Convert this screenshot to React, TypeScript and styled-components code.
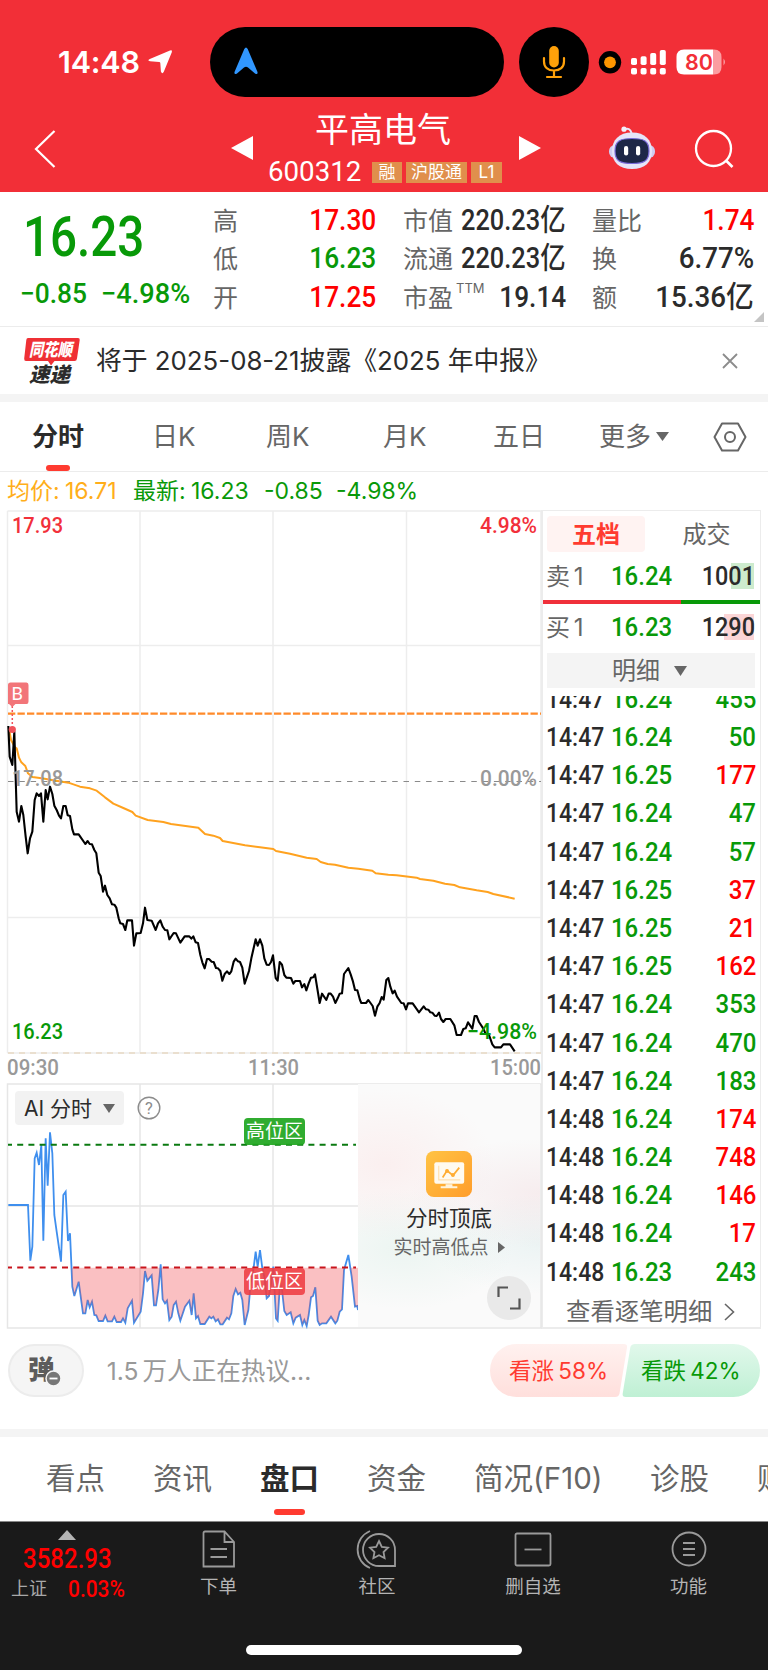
import React from "react";
import styled, { createGlobalStyle, css } from "styled-components";

const RED = "#ff0000";
const GREEN = "#089908";
const INK = "#2b2b2b";
const GREY = "#666";

const Global = createGlobalStyle`
  * { box-sizing: border-box; }
  body { margin: 0; background: #fff; }
  svg { display: block; flex: none; overflow: visible; }
  svg text { font-family: Roboto, "Noto Sans CJK SC", sans-serif; }
`;

const Page = styled.div`
  width: 768px;
  height: 1670px;
  overflow: hidden;
  background: #fff;
  color: ${INK};
  font-family: Inter, "Noto Sans CJK SC", sans-serif;
  line-height: 1;
  white-space: nowrap;
`;

const Num = styled.span<{ $size: number; $color?: string; $x?: number; $from?: string; $weight?: number }>`
  display: inline-block;
  font-family: Roboto, "Noto Sans CJK SC", sans-serif;
  font-size: ${(p) => p.$size}px;
  font-weight: ${(p) => p.$weight ?? 500};
  color: ${(p) => p.$color ?? "inherit"};
  transform: scaleX(${(p) => p.$x ?? 0.89});
  transform-origin: ${(p) => p.$from ?? "left"} center;
`;

/* ---------- header ---------- */
const Header = styled.header`
  height: 192px;
  background: #f22f37;
  color: #fff;
`;
const StatusBar = styled.div`
  height: 97px;
  padding: 27px 0 0 58px;
  display: flex;
`;
const Clock = styled.div`
  width: 152px;
  height: 70px;
  display: flex;
  align-items: center;
  gap: 8px;
  font: 600 30.5px/1 Inter, sans-serif;
  letter-spacing: -0.2px;
`;
const Island = styled.div`
  width: 294px;
  height: 70px;
  border-radius: 35px;
  background: #000;
  padding: 20px 0 0 23px;
  margin-right: 15px;
`;
const MicBubble = styled.div`
  width: 70px;
  height: 70px;
  border-radius: 50%;
  background: #000;
  display: flex;
  align-items: center;
  justify-content: center;
  margin-right: 10px;
`;
const Indicators = styled.div`
  height: 70px;
  display: flex;
  align-items: center;
`;
const TitleBar = styled.div`
  height: 95px;
  padding-left: 34px;
  display: flex;
`;
const TitleSlot = styled.div<{ $w: number; $top: number }>`
  width: ${(p) => p.$w}px;
  padding-top: ${(p) => p.$top}px;
`;
const StockTitle = styled.div`
  width: 266px;
  padding: 16px 0 0 15px;
`;
const StockName = styled.div`
  padding-left: 47px;
  font-size: 34px;
  height: 47px;
`;
const CodeRow = styled.div`
  display: flex;
  align-items: center;
  height: 24px;
`;
const Code = styled.span`
  flex: none;
  width: 104px;
  font-family: Roboto, sans-serif;
  font-size: 27.7px;
`;
const Tag = styled.span<{ $w: number }>`
  flex: none;
  width: ${(p) => p.$w}px;
  height: 21px;
  margin-right: 4px;
  background: #e08f4c;
  font-size: 17px;
  line-height: 21px;
  text-align: center;
`;

/* ---------- quote ---------- */
const Quote = styled.section`
  height: 135px;
  border-bottom: 1px solid #ececec;
  display: flex;
`;
const LastPrice = styled.div`
  width: 213px;
  padding: 18px 0 0 23px;
  color: ${GREEN};
`;
const ChangeRow = styled.div`
  display: flex;
  margin: 15px 0 0 -3px;
`;
const ChangeCell = styled.div<{ $w: number }>`
  width: ${(p) => p.$w}px;
`;
const StatCol = styled.div<{ $w: number; $gap: number }>`
  width: ${(p) => p.$w}px;
  margin-right: ${(p) => p.$gap}px;
  padding-top: 10px;
`;
const Stat = styled.div`
  display: flex;
  justify-content: space-between;
  align-items: center;
  height: 38.5px;
  font-size: 25px;
  color: ${GREY};
`;
const StatValue = styled(Num)`
  margin-left: -40px;
  padding-bottom: 2px;
`;
const Sup = styled.sup`
  font-size: 13px;
  vertical-align: 14px;
  margin-left: 3px;
  line-height: 0;
`;
const Corner = styled.svg`
  align-self: flex-end;
  margin-bottom: 4px;
`;

const Notice = styled.section`
  height: 67px;
  padding-left: 23px;
  display: flex;
  align-items: center;
`;
const NoticeText = styled.div`
  width: 642px;
  padding-left: 16px;
  font-size: 25.8px;
`;
const Band = styled.div`
  height: 8px;
  background: #f4f4f4;
`;

/* ---------- tabs ---------- */
const Tabs = styled.nav<{ $h: number; $pad: number }>`
  height: ${(p) => p.$h}px;
  padding-left: ${(p) => p.$pad}px;
  display: flex;
  align-items: center;
  overflow: hidden;
`;
const PeriodTabs = styled(Tabs)`
  border-bottom: 1px solid #ececec;
`;
const Tab = styled.div<{ $w: number; $size: number; $on?: boolean; $bar?: number; $low?: number }>`
  position: relative;
  flex: none;
  width: ${(p) => p.$w}px;
  height: 100%;
  display: flex;
  align-items: center;
  font-size: ${(p) => p.$size}px;
  color: ${GREY};
  ${(p) =>
    p.$on &&
    css`
      color: ${INK};
      font-weight: 700;
      &::after {
        content: "";
        position: absolute;
        left: ${p.$size - (p.$bar ?? 24) / 2}px;
        bottom: ${p.$low ?? 0}px;
        width: ${p.$bar ?? 24}px;
        height: 6px;
        border-radius: 3px;
        background: #ff3b30;
      }
    `}
`;
const Summary = styled.div`
  height: 38px;
  padding: 1px 0 0 7px;
  display: flex;
  align-items: center;
  font-size: 23px;
`;
const SummaryItem = styled.span<{ $w: number; $color: string }>`
  width: ${(p) => p.$w}px;
  color: ${(p) => p.$color};
`;

/* ---------- trading area ---------- */
const Trading = styled.section`
  height: 819px;
  display: flex;
`;
const Charts = styled.div`
  flex: none;
  width: 541px;
`;
const AiPane = styled.div`
  position: relative;
  height: 246px;
`;
const AiTools = styled.div`
  position: absolute;
  left: 15px;
  top: 8px;
  display: flex;
  align-items: center;
  gap: 13px;
`;
const AiPick = styled.div`
  width: 109px;
  height: 34px;
  padding-left: 9px;
  border-radius: 4px;
  background: #f2f2f2;
  display: flex;
  align-items: center;
  justify-content: space-between;
  padding-right: 9px;
  font-size: 21px;
`;
const ZoneTag = styled.div<{ $top: number; $bg: string }>`
  position: absolute;
  left: 244px;
  top: ${(p) => p.$top}px;
  width: 61px;
  height: 27px;
  border-radius: 4px;
  background: ${(p) => p.$bg};
  color: #fff;
  font-size: 19px;
  line-height: 27px;
  text-align: center;
`;
const Promo = styled.div`
  position: absolute;
  left: 358px;
  top: 1px;
  width: 182px;
  height: 243px;
  padding-top: 67px;
  display: flex;
  flex-direction: column;
  align-items: center;
  background:
    radial-gradient(ellipse 110px 75px at 15% 33%, rgba(255, 190, 190, 0.18), transparent),
    radial-gradient(ellipse 130px 55px at 100% 45%, rgba(225, 160, 170, 0.15), transparent),
    radial-gradient(ellipse 110px 60px at 25% 68%, rgba(150, 215, 190, 0.14), transparent),
    radial-gradient(ellipse 110px 50px at 100% 66%, rgba(150, 205, 205, 0.14), transparent),
    #fafafa;
`;
const PromoTitle = styled.div`
  margin-top: 11px;
  font-size: 21.5px;
  color: ${INK};
`;
const PromoSub = styled.div`
  margin-top: 8px;
  font-size: 19px;
  color: ${GREY};
  display: flex;
  align-items: center;
  gap: 9px;
`;
const Expand = styled.div`
  align-self: flex-end;
  margin: 19px 9px 0 0;
  width: 44px;
  height: 44px;
  border-radius: 50%;
  background: #e9e9e9;
  display: flex;
  align-items: center;
  justify-content: center;
`;

/* ---------- order book ---------- */
const Book = styled.aside`
  flex: none;
  width: 220px;
  height: 819px;
  border: solid #ececec;
  border-width: 1px 1px 2px 2px;
  font-size: 24px;
`;
const BookTabs = styled.div`
  display: flex;
  padding: 5px 0 0 4px;
`;
const BookTab = styled.div<{ $w: number; $on?: boolean }>`
  flex: none;
  width: ${(p) => p.$w}px;
  height: 36px;
  line-height: 37px;
  text-align: center;
  border-radius: 4px;
  color: ${(p) => (p.$on ? "#ff3b30" : GREY)};
  background: ${(p) => (p.$on ? "#fff3f2" : "transparent")};
  font-weight: ${(p) => (p.$on ? 700 : 400)};
`;
const Level = styled.div<{ $h: number; $hl: string; $hlw: number }>`
  height: ${(p) => p.$h}px;
  padding: 1px 5px 0 3px;
  display: grid;
  grid-template-columns: 65px 1fr auto;
  align-items: center;
  color: ${GREY};
  background: linear-gradient(${(p) => p.$hl}, ${(p) => p.$hl}) right 6px center / ${(p) => p.$hlw}px 26px no-repeat;
`;
const Side = styled.span`
  word-spacing: -3px;
`;
const Ratio = styled.div`
  height: 4px;
  background: linear-gradient(90deg, #f0303a 0 63.5%, #089908 63.5%);
`;
const DetailHead = styled.div`
  height: 35px;
  margin: 3px 5px 8px 4px;
  padding-left: 65px;
  background: #f4f4f4;
  color: ${GREY};
  display: flex;
  align-items: center;
  gap: 14px;
`;
const Ticks = styled.div`
  height: 595px;
  overflow: hidden;
`;
const TickList = styled.div`
  margin-top: -15.5px;
`;
const Tick = styled.div`
  height: 38.2px;
  padding: 0 4px 0 3px;
  display: grid;
  grid-template-columns: 65px 1fr auto;
  align-items: center;
`;
const More = styled.div`
  height: 36px;
  padding: 5px 0 0 23px;
  display: flex;
  align-items: center;
  gap: 12px;
  color: ${GREY};
  font-size: 24.4px;
`;

/* ---------- discussion ---------- */
const Discuss = styled.section`
  height: 100px;
  padding: 15px 8px 0;
  display: flex;
`;
const DanmuButton = styled.div`
  width: 76px;
  height: 53px;
  border-radius: 27px;
  border: 2px solid #ececec;
  background: #f5f5f5;
  display: flex;
  align-items: center;
  justify-content: center;
  padding-right: 2px;
`;
const DiscussText = styled.div`
  width: 407px;
  height: 53px;
  padding-left: 23px;
  color: #999;
  font-size: 24.6px;
  line-height: 54px;
  word-spacing: -3px;
`;
const Votes = styled.div`
  position: relative;
  display: flex;
  height: 53px;
  font-size: 22.5px;
  word-spacing: -2px;
`;
const VoteLabel = styled.div<{ $color: string; $l: number }>`
  position: absolute;
  left: ${(p) => p.$l}px;
  line-height: 54px;
  color: ${(p) => p.$color};
`;

/* ---------- bottom bar ---------- */
const BottomBar = styled.footer`
  height: 149px;
  background: #1a1a1a;
  color: #b4b4b4;
  border-top: 1px solid #888;
`;
const BottomItems = styled.div`
  height: 123px;
  display: flex;
`;
const IndexBox = styled.div`
  width: 140px;
  padding: 8px 0 0 11px;
  color: ${RED};
`;
const IndexRow = styled.div`
  display: flex;
  align-items: center;
  height: 30px;
  margin-top: 4px;
  & + & {
    margin-top: 0;
  }
`;
const IndexName = styled.span`
  width: 57px;
  color: #a8a8a8;
  font-size: 18px;
`;
const NavItem = styled.div<{ $w: number }>`
  width: ${(p) => p.$w}px;
  padding-top: 7px;
  display: flex;
  flex-direction: column;
  align-items: center;
  gap: 8px;
  font-size: 18.5px;
`;
const HomeBar = styled.div`
  width: 276px;
  height: 10px;
  margin: 0 auto;
  border-radius: 5px;
  background: #fff;
`;

/* ---------- chart data: x,y pairs in thirds of a pixel ---------- */
type Series = { ox: number; oy: number; d: string };

const PRICE: Series[] = [
  { ox: 0, oy: 660, d: "25,198 29,290 37,315 43,215 50,455 57,485 64,438 70,465 77,530 83,580 90,535 97,515 104,420 110,400 117,408 123,400 130,485 137,390 143,418 150,380 157,402 163,437 170,450 177,467 183,475 190,438 197,438 203,466 210,468 217,508 222,523 236,523 256,552 263,543 269,552 276,553 283,570 289,580 296,638 302,648 309,695 315,677 322,705 329,715 336,733 343,734 349,743 356,775 361,790 369,792 376,810 382,781 396,781 402,857 409,820 422,819 429,790 435,743 442,780 455,782 467,810 474,790 481,781 488,800 495,810 502,811 508,838 521,819 528,820 541,848 554,829 568,829 574,836 580,829 587,847 594,849" },
  { ox: 180, oy: 900, d: "61,165 67,187 74,205 81,177 87,177 95,185 101,186 108,204 114,205 121,213 127,242 134,222 141,214 148,222 154,214 161,185 167,176 174,184 180,186 187,203 194,251 207,213 214,175 227,118 233,137 240,118 247,137 253,175 260,194 267,195 273,186 279,166 287,234 293,242 299,186 306,194 313,225 319,233 333,234 340,251 346,243 360,243 366,262 373,252 379,271 386,250 393,233 400,232 405,223 419,309 426,281 439,300 446,281 452,281 459,290 466,309 473,295 479,281 486,280 492,222 505,204 512,223 519,245 525,270 532,271 540,300" },
  { ox: 260, oy: 760, d: "304,729 318,729 325,720 338,738 345,767 352,740 359,729 365,711 371,719 379,660 385,654 391,680 398,700 404,692 411,710 424,729 431,730 438,748 444,730 458,730 477,757 491,739 498,748 505,749 511,757 517,758 524,767 530,768 537,758 543,777 550,786 557,777 571,777 583,796 590,825 603,825 610,807 617,805 624,787 637,806 644,768 650,768 657,786 670,806 677,822 686,822 697,853 704,862 723,862 730,853 750,853 764,874" },
];
const AVERAGE: Series[] = [
  { ox: 0, oy: 660, d: "27,205 33,240 45,262 50,265 57,293 64,307 76,318 84,340 97,351 125,355 160,361 205,368 240,380 270,385 290,392 315,412 340,431 370,444 397,456 407,467 443,480 490,486 513,492 595,503 615,522 640,527 660,534 668,543 735,556 780,562" },
  { ox: 260, oy: 760, d: "40,267 48,273 90,281 140,293 170,297 182,306 203,312 225,314 265,323 295,326 337,332 347,340 385,344 410,346 470,353 480,357 520,362 555,371 583,375 600,382 650,391 683,396 700,402 764,416" },
];
const AI: Series[] = [
  { ox: 0, oy: 1050, d: "25,465 84,465 91,632 97,590 104,325 110,308 117,345 124,285 130,572 137,265 143,407 150,247 157,310 163,495 170,545 183,635 190,435 197,425 204,573 210,550 217,710 223,738 236,695 249,790 256,790 263,750 269,772 276,755 283,795 289,796 296,813 309,813 316,797 323,814 336,814 343,800 350,816 363,816 369,805 376,818 383,775 396,752 402,818 422,785 429,730 435,663 442,692 455,676 462,766 468,766 475,720 482,643 488,748 495,760 501,752 508,810 515,800 521,765 528,755 535,790 541,812 555,770 568,752 575,795 581,730 588,805 594,798 601,822 614,822 628,800 634,805 640,800 647,814 654,808 661,823 668,823 681,803 687,808 694,790 700,738 707,717 714,733 721,728 727,750 734,825 745,780 752,700 760,660 767,605 773,650 780,600 787,655 793,680 800,745 807,738 813,700 820,650 828,805 833,812 840,700 846,720 853,783 860,795 872,787 880,820 887,803 900,795 907,825 913,810 920,828 926,795 933,742 939,738 946,712 953,812 959,825 966,820 979,820 993,800 1006,820 1012,812 1019,785 1026,778 1032,660 1045,615 1055,680 1065,770 1072,768 1074,780" },
];
const toPoints = (series: Series[]) =>
  series
    .flatMap((s) =>
      s.d.split(" ").map((p) => {
        const [x, y] = p.split(",").map(Number);
        return `${(x / 3 + s.ox).toFixed(2)},${(y / 3 + s.oy).toFixed(2)}`;
      })
    )
    .join(" ");

const Label = ({ x, y, w, color, children }: { x: number; y: number; w: number; color: string; children: string }) => (
  <text x={x} y={y} fontSize={22.5} fontWeight={500} fill={color} textLength={w} lengthAdjust="spacingAndGlyphs">
    {children}
  </text>
);

const Down = ({ w = 13, h = 10, c = "#666" }: { w?: number; h?: number; c?: string }) => (
  <svg width={w} height={h} viewBox="0 0 12 10" preserveAspectRatio="none">
    <path d="M0 0H12L6 10Z" fill={c} />
  </svg>
);

const PriceChart = () => (
  <svg width="541" height="573" viewBox="0 510 541 573">
    <path d="M7.5 511H541V1053M7.5 511V1053M140 511V1053M273 511V1053M406.5 511V1053M7.5 645.5H541M7.5 917.5H541M7.5 1053H541" stroke="#ededed" strokeWidth="1.5" fill="none" />
    <path d="M8 1053H541" stroke="#e8d9c4" strokeWidth="1.5" strokeDasharray="6 5" />
    <path d="M8 781.5H541" stroke="#8a8a8a" strokeWidth="1.2" strokeDasharray="5.5 5.8" />
    <path d="M8 713.7H541" stroke="#ff8a2a" strokeWidth="2.2" strokeDasharray="7.3 2.2" />
    <Label x={12} y={533} w={51} color="#f2303a">17.93</Label>
    <Label x={480} y={533} w={57} color="#f2303a">4.98%</Label>
    <polyline points={toPoints(AVERAGE)} fill="none" stroke="#ffa21f" strokeWidth="2" strokeLinejoin="round" />
    <polyline points={toPoints(PRICE)} fill="none" stroke="#000" strokeWidth="2.1" strokeLinejoin="round" />
    <Label x={12} y={785.5} w={51} color="#999">17.08</Label>
    <Label x={480} y={785.5} w={57} color="#999">0.00%</Label>
    <Label x={12} y={1039} w={51} color={GREEN}>16.23</Label>
    <Label x={467} y={1039} w={70} color={GREEN}>−4.98%</Label>
    <Label x={7} y={1075} w={52} color="#999">09:30</Label>
    <Label x={248} y={1075} w={51} color="#999">11:30</Label>
    <Label x={490} y={1075} w={51} color="#999">15:00</Label>
    <path d="M12.3 706V726" stroke="#f2505a" strokeWidth="1.5" strokeDasharray="2 2" />
    <circle cx="12.3" cy="729.5" r="3.6" fill="#f0525a" />
    <path d="M8 685Q8 682.5 10.5 682.5H26.5Q28.5 682.5 28.5 685V701.5Q28.5 704 26.5 704H15.5L12.3 707L9 704H8Z" fill="#f27579" />
    <text x="11.5" y="700.3" fontSize="18.5" fill="#fff">B</text>
  </svg>
);

const AiChart = () => {
  const pts = toPoints(AI);
  return (
    <svg width="541" height="246" viewBox="0 1083 541 246">
      <clipPath id="low-zone">
        <rect x="70" y="1267.7" width="288" height="60" />
      </clipPath>
      <path d="M7.5 1084H541V1328H7.5ZM140 1084V1328M273 1084V1328M7.5 1206H358" stroke="#e6e6e6" strokeWidth="1.5" fill="none" />
      <polyline points={pts} fill="none" stroke="#3f8fee" strokeWidth="1.8" />
      <polygon points={`${pts} 358.5,1240 8,1240`} fill="rgba(238,60,66,.32)" clipPath="url(#low-zone)" />
      <path d="M8 1144.7H356" stroke="#0a7a10" strokeWidth="1.9" strokeDasharray="6 5.2" strokeDashoffset="2" />
      <path d="M8 1267.5H356" stroke="#c8141c" strokeWidth="1.9" strokeDasharray="6 5.2" strokeDashoffset="2" />
    </svg>
  );
};

const TICKS: [string, string, string, boolean][] = [
  ["14:47", "16.24", "455", false],
  ["14:47", "16.24", "50", false],
  ["14:47", "16.25", "177", true],
  ["14:47", "16.24", "47", false],
  ["14:47", "16.24", "57", false],
  ["14:47", "16.25", "37", true],
  ["14:47", "16.25", "21", true],
  ["14:47", "16.25", "162", true],
  ["14:47", "16.24", "353", false],
  ["14:47", "16.24", "470", false],
  ["14:47", "16.24", "183", false],
  ["14:48", "16.24", "174", true],
  ["14:48", "16.24", "748", true],
  ["14:48", "16.24", "146", true],
  ["14:48", "16.24", "17", true],
  ["14:48", "16.23", "243", false],
];

const StatRow = ({ name, sup, value, color, x }: { name: string; sup?: string; value: string; color?: string; x?: number }) => (
  <Stat>
    <span>
      {name}
      {sup && <Sup>{sup}</Sup>}
    </span>
    <StatValue $size={29.5} $from="right" $x={x} $color={color ?? INK}>
      {value}
    </StatValue>
  </Stat>
);

const Robot = () => (
  <svg width="48" height="44" viewBox="0 0 48 44">
    <path d="M16 3.5Q22 1 23.5 7" stroke="#e9e8fa" strokeWidth="2" fill="none" />
    <circle cx="16" cy="3.2" r="2.6" fill="#f3f0fb" />
    <rect x="1" y="19" width="46" height="13" rx="6" fill="#cfcdf0" />
    <path d="M24 6.5C37 6.500 44 14 44 25S37 43 24 43S4 36 4 25S11 6.500 24 6.500Z" fill="#e6e4f8" />
    <path d="M24 12.500C36 12.500 41 15 41 25S36 37.500 24 37.500S7 35 7 25S12 12.500 24 12.500Z" fill="#1d2747" stroke="#7a6bd8" strokeWidth="1.2" />
    <rect x="16" y="20" width="4.200" height="9.500" rx="2.100" fill="#fff" />
    <rect x="28" y="20" width="4.200" height="9.500" rx="2.100" fill="#fff" />
  </svg>
);

const PageHeader = () => (
  <Header>
    <StatusBar>
      <Clock>
        14:48
        <svg width="24" height="24" viewBox="0 0 24 24">
          <path d="M22 .6Q24.600 -.4 23.800 2.200L15.800 21.800Q14.300 24.800 12.900 21.600L12.300 13Q12.200 12 11.200 11.900L2 11.300Q-1.200 10.500 1.800 9Z" fill="#fff" />
        </svg>
      </Clock>
      <Island>
        <svg width="26" height="28" viewBox="0 0 26 28">
          <path d="M11.300 2Q13 -1.200 14.700 2L24.500 25Q25 28 22 26.500L15 20.500Q13 19 11 20.500L4 26.500Q1 28 1.500 25Z" fill="#3197ff" />
        </svg>
      </Island>
      <MicBubble>
        <svg width="24" height="34" viewBox="0 0 24 34">
          <rect x="7.200" y="1" width="9.600" height="21.500" rx="4.800" fill="#ffa10a" />
          <path d="M2 13V16.500C2 22 6 25.500 12 25.500S22 22 22 16.500V13M12 25.500V32M5 32H19" fill="none" stroke="#ffa10a" strokeWidth="2.200" strokeLinecap="round" />
        </svg>
      </MicBubble>
      <Indicators>
        <svg width="128" height="28" viewBox="0 0 128 28">
          <circle cx="11" cy="14.300" r="11.200" fill="#000" />
          <circle cx="11" cy="14.300" r="5.900" fill="#ff9500" />
          {[0, 1, 2, 3].map((i) => (
            <g key={i} fill="#fff">
              <rect x={32 + i * 9.600} y={[10, 8.200, 5, 2][i]} width="6" height={[7, 8.800, 12, 15][i]} rx="1.800" />
              <rect x={32 + i * 9.600} y="20" width="6" height="6.500" rx="1.800" />
            </g>
          ))}
          <path d="M85 1.500H114V26.500H85Q77.500 26.500 77.500 19V9Q77.500 1.500 85 1.500Z" fill="#fff" />
          <path d="M114 1.500H115Q122.500 1.500 122.500 9V19Q122.500 26.500 115 26.500H114Z" fill="#fb9da1" />
          <path d="M124.500 10.500Q127.500 14 124.500 17.500Z" fill="#fb9da1" />
          <text x="86" y="21.800" fontSize="21" fontWeight="600" fill="#f22f37" style={{ fontFamily: "Inter" }} textLength="28" lengthAdjust="spacingAndGlyphs">
            80
          </text>
        </svg>
      </Indicators>
    </StatusBar>
    <TitleBar>
      <TitleSlot $w={197} $top={32}>
        <svg width="22" height="40" viewBox="0 0 22 40">
          <path d="M20.500 2L2 20L20.500 38" fill="none" stroke="#fff" strokeWidth="2.200" />
        </svg>
      </TitleSlot>
      <TitleSlot $w={22} $top={39}>
        <svg width="22" height="24" viewBox="0 0 22 24">
          <path d="M22 0V24L0 12Z" fill="#fff" />
        </svg>
      </TitleSlot>
      <StockTitle>
        <StockName>平高电气</StockName>
        <CodeRow>
          <Code>600312</Code>
          <Tag $w={30}>融</Tag>
          <Tag $w={61}>沪股通</Tag>
          <Tag $w={31}>L1</Tag>
        </CodeRow>
      </StockTitle>
      <TitleSlot $w={89} $top={39}>
        <svg width="22" height="24" viewBox="0 0 22 24">
          <path d="M0 0V24L22 12Z" fill="#fff" />
        </svg>
      </TitleSlot>
      <TitleSlot $w={86} $top={29}>
        <Robot />
      </TitleSlot>
      <svg width="40" height="72" viewBox="0 0 40 72">
        <circle cx="19.500" cy="51.500" r="17.500" fill="none" stroke="#fff" strokeWidth="2.300" />
        <path d="M32 63.500L38.500 70" stroke="#fff" strokeWidth="2.600" />
      </svg>
    </TitleBar>
  </Header>
);

export default function App() {
  return (
    <Page>
      <Global />
      <PageHeader />

      <Quote>
        <LastPrice>
          <Num $size={55} $x={0.865}>16.23</Num>
          <ChangeRow>
            <ChangeCell $w={81}><Num $size={28} $x={0.94}>−0.85</Num></ChangeCell>
            <ChangeCell $w={90}><Num $size={28} $x={0.97}>−4.98%</Num></ChangeCell>
          </ChangeRow>
        </LastPrice>
        <StatCol $w={163} $gap={27}>
          <StatRow name="高" value="17.30" color={RED} />
          <StatRow name="低" value="16.23" color={GREEN} />
          <StatRow name="开" value="17.25" color={RED} />
        </StatCol>
        <StatCol $w={163} $gap={26}>
          <StatRow name="市值" value="220.23亿" x={0.86} />
          <StatRow name="流通" value="220.23亿" x={0.86} />
          <StatRow name="市盈" sup="TTM" value="19.14" />
        </StatCol>
        <StatCol $w={162} $gap={0}>
          <StatRow name="量比" value="1.74" color={RED} />
          <StatRow name="换" value="6.77%" x={0.94} />
          <StatRow name="额" value="15.36亿" x={0.94} />
        </StatCol>
        <Corner width="10" height="10"><path d="M10 0V10H0Z" fill="#c4c4c4" /></Corner>
      </Quote>

      <Notice>
        <svg width="57" height="48" viewBox="0 0 57 48">
          <path d="M5 1H55Q57 1 56.700 3L54 21.500Q53.700 24 51.500 24H31.500L28 28.500L25 24H3Q1 24 1.200 21.500L3.300 3Q3.500 1 5 1Z" fill="#ef3035" />
          <g fontWeight="900" fontStyle="italic">
            <text x="6" y="19" fontSize="17.500" fill="#fff" textLength="43" lengthAdjust="spacingAndGlyphs">同花顺</text>
            <text x="6" y="44.500" fontSize="20.500" fill={INK} textLength="41" lengthAdjust="spacingAndGlyphs">速递</text>
          </g>
        </svg>
        <NoticeText>将于 2025-08-21披露《2025 年中报》</NoticeText>
        <svg width="16" height="16" viewBox="0 0 16 16">
          <path d="M1 1L15 15M15 1L1 15" stroke="#8c8c8c" strokeWidth="1.800" />
        </svg>
      </Notice>
      <Band />

      <PeriodTabs $h={70} $pad={32}>
        <Tab $w={120} $size={26} $on>分时</Tab>
        <Tab $w={114} $size={26}>日K</Tab>
        <Tab $w={117} $size={26}>周K</Tab>
        <Tab $w={110} $size={26}>月K</Tab>
        <Tab $w={106} $size={26}>五日</Tab>
        <Tab $w={57} $size={26}>更多</Tab>
        <Down w={13} h={9} />
        <svg width="34" height="30" viewBox="0 0 34 30" style={{ marginLeft: 44 }}>
          <path d="M9 1.500H25L32.500 15L25 28.500H9L1.500 15Z" fill="none" stroke="#666" strokeWidth="2" strokeLinejoin="round" />
          <circle cx="17" cy="15" r="5" fill="none" stroke="#666" strokeWidth="2" />
        </svg>
      </PeriodTabs>
      <Summary>
        <SummaryItem $w={58} $color="#ffae1a">均价:</SummaryItem>
        <SummaryItem $w={68} $color="#ffae1a">16.71</SummaryItem>
        <SummaryItem $w={58} $color={GREEN}>最新:</SummaryItem>
        <SummaryItem $w={73} $color={GREEN}>16.23</SummaryItem>
        <SummaryItem $w={72} $color={GREEN}>-0.85</SummaryItem>
        <SummaryItem $w={90} $color={GREEN}>-4.98%</SummaryItem>
      </Summary>

      <Trading>
        <Charts>
          <PriceChart />
          <AiPane>
            <AiChart />
            <AiTools>
              <AiPick>AI 分时 <Down w={12} h={9} /></AiPick>
              <svg width="24" height="24" viewBox="0 0 24 24">
                <circle cx="12" cy="12" r="10.800" fill="none" stroke="#8c8c8c" strokeWidth="1.400" />
                <text x="12" y="18" fontSize="16.500" textAnchor="middle" fill="#8c8c8c">?</text>
              </svg>
            </AiTools>
            <ZoneTag $top={35} $bg="rgba(30,165,30,.92)">高位区</ZoneTag>
            <ZoneTag $top={185} $bg="rgba(238,60,66,.88)">低位区</ZoneTag>
            <Promo>
              <svg width="46" height="46" viewBox="0 0 47 47">
                <defs>
                  <linearGradient id="promo" x1="0" y1="0" x2="1" y2="1">
                    <stop offset="0" stopColor="#ffc344" />
                    <stop offset="1" stopColor="#ff9d2b" />
                  </linearGradient>
                </defs>
                <rect width="47" height="47" rx="8" fill="url(#promo)" />
                <rect x="8.500" y="11.500" width="30.500" height="22" rx="2" fill="#fffaf0" />
                <path d="M20 34H27V36H32V38H15V36H20Z" fill="#fff3dc" />
                <path d="M13 15V29.500H35" fill="none" stroke="#ffe0b0" strokeWidth="1.200" />
                <path d="M17 27L21.500 20L27.500 25L34 17" fill="none" stroke="#ffac33" strokeWidth="1.800" />
                <circle cx="21.500" cy="20.500" r="2" fill="#ffac33" />
                <circle cx="27.500" cy="24.500" r="2" fill="#ffac33" />
              </svg>
              <PromoTitle>分时顶底</PromoTitle>
              <PromoSub>
                实时高低点
                <svg width="7" height="11"><path d="M0 0L7 5.500L0 11Z" fill="#666" /></svg>
              </PromoSub>
              <Expand>
                <svg width="24" height="24" viewBox="0 0 24 24" fill="none" stroke="#555" strokeWidth="2.200">
                  <path d="M1.500 11V1.500H11M22.500 12.500V22.500H13" />
                </svg>
              </Expand>
            </Promo>
          </AiPane>
        </Charts>

        <Book>
          <BookTabs>
            <BookTab $w={98} $on>五档</BookTab>
            <BookTab $w={123}>成交</BookTab>
          </BookTabs>
          <Level $h={48} $hl="#cdebcd" $hlw={23}>
            <Side>卖 1</Side>
            <Num $size={25.5} $x={0.94} $color={GREEN}>16.24</Num>
            <Num $size={25.5} $x={0.92} $from="right" $color={INK}>1001</Num>
          </Level>
          <Ratio />
          <Level $h={46} $hl="#fbd5d6" $hlw={30}>
            <Side>买 1</Side>
            <Num $size={25.5} $x={0.94} $color={GREEN}>16.23</Num>
            <Num $size={25.5} $x={0.92} $from="right" $color={INK}>1290</Num>
          </Level>
          <DetailHead>明细 <Down w={13} h={10} /></DetailHead>
          <Ticks>
            <TickList>
              {TICKS.map(([time, price, vol, up], i) => (
                <Tick key={i}>
                  <Num $size={25.5} $x={0.9} $color={INK}>{time}</Num>
                  <Num $size={25.5} $x={0.94} $color={GREEN}>{price}</Num>
                  <Num $size={25.5} $x={0.94} $from="right" $color={up ? RED : GREEN}>{vol}</Num>
                </Tick>
              ))}
            </TickList>
          </Ticks>
          <More>
            查看逐笔明细
            <svg width="11" height="18"><path d="M1 1L9.500 9L1 17" fill="none" stroke="#666" strokeWidth="1.600" /></svg>
          </More>
        </Book>
      </Trading>

      <Discuss>
        <DanmuButton>
          <svg width="38" height="36" viewBox="0 0 38 36">
            <text x="2" y="26" fontSize="26.500" fontWeight="900" fill="#5c5c5c">弹</text>
            <circle cx="27.500" cy="25.500" r="7.500" fill="#777" stroke="#f5f5f5" strokeWidth="1.500" />
            <path d="M23.500 25.500H31.500" stroke="#fff" strokeWidth="1.800" />
          </svg>
        </DanmuButton>
        <DiscussText>1.5 万人正在热议...</DiscussText>
        <Votes>
          <svg width="270" height="53" viewBox="0 0 270 53">
            <defs>
              <linearGradient id="rise" x1="0" y1="0" x2="0" y2="1">
                <stop offset="0" stopColor="#fff1ef" /><stop offset="1" stopColor="#ffdfdc" />
              </linearGradient>
              <linearGradient id="fall" x1="0" y1="0" x2="0" y2="1">
                <stop offset="0" stopColor="#e1f8eb" /><stop offset="1" stopColor="#bff0d4" />
              </linearGradient>
            </defs>
            <path d="M26.500 0H134Q137.500 0 137 3.500L129.500 49.500Q128.800 53 125 53H26.500A26.500 26.500 0 0 1 26.500 0Z" fill="url(#rise)" />
            <path d="M145 0H243.500A26.500 26.500 0 0 1 243.500 53H136Q132 53 132.700 49.500L140.300 3.500Q141 0 145 0Z" fill="url(#fall)" />
          </svg>
          <VoteLabel $color="#ff3b30" $l={19}>看涨 58%</VoteLabel>
          <VoteLabel $color="#089908" $l={151}>看跌 42%</VoteLabel>
        </Votes>
      </Discuss>
      <Band />

      <Tabs $h={84} $pad={46}>
        <Tab $w={107} $size={29.5}>看点</Tab>
        <Tab $w={107} $size={29.5}>资讯</Tab>
        <Tab $w={107} $size={29.5} $on $bar={31} $low={6}>盘口</Tab>
        <Tab $w={107} $size={29.5}>资金</Tab>
        <Tab $w={176} $size={29.5}>简况(F10)</Tab>
        <Tab $w={107} $size={29.5}>诊股</Tab>
        <Tab $w={60} $size={29.5}>财务</Tab>
      </Tabs>

      <BottomBar>
        <BottomItems>
          <IndexBox>
            <svg width="18" height="10" style={{ marginLeft: 47 }}><path d="M9 0L18 10H0Z" fill="#b4b4b4" /></svg>
            <IndexRow><Num $size={27} $x={0.89} style={{ marginLeft: 12 }}>3582.93</Num></IndexRow>
            <IndexRow>
              <IndexName>上证</IndexName>
              <Num $size={23} $x={0.91}>0.03%</Num>
            </IndexRow>
          </IndexBox>
          <NavItem $w={157}>
            <svg width="36" height="40" viewBox="0 0 36 40" fill="none" stroke="#9a9a9a" strokeWidth="1.800">
              <path d="M4 2.500H23.500L33 13V37.500H2.500V4Q2.500 2.500 4 2.500ZM23.500 2.500V13H33M9.500 20H26M9.500 28H26" />
            </svg>
            下单
          </NavItem>
          <NavItem $w={160}>
            <svg width="40" height="40" viewBox="0 0 40 40" fill="none" stroke="#9a9a9a" strokeWidth="1.800">
              <path d="M38 37H22A16 16 0 1 1 38 21Z" />
              <path d="M13 2A20 20 0 0 0 13 39" />
              <path d="M22 12L24.800 17.800L31 18.600L26.500 23L27.600 29.200L22 26.200L16.400 29.200L17.500 23L13 18.600L19.200 17.800Z" />
            </svg>
            社区
          </NavItem>
          <NavItem $w={152}>
            <svg width="38" height="40" viewBox="0 0 38 40" fill="none" stroke="#9a9a9a" strokeWidth="1.800">
              <rect x="1.500" y="4.500" width="35" height="32" rx="1.500" />
              <path d="M10.500 20.500H27.500" />
            </svg>
            删自选
          </NavItem>
          <NavItem $w={159}>
            <svg width="36" height="40" viewBox="0 0 36 40" fill="none" stroke="#9a9a9a" strokeWidth="1.800">
              <circle cx="18" cy="20" r="16.500" />
              <path d="M12 14H24M12 20H24M12 26H24" />
            </svg>
            功能
          </NavItem>
        </BottomItems>
        <HomeBar />
      </BottomBar>
    </Page>
  );
}
